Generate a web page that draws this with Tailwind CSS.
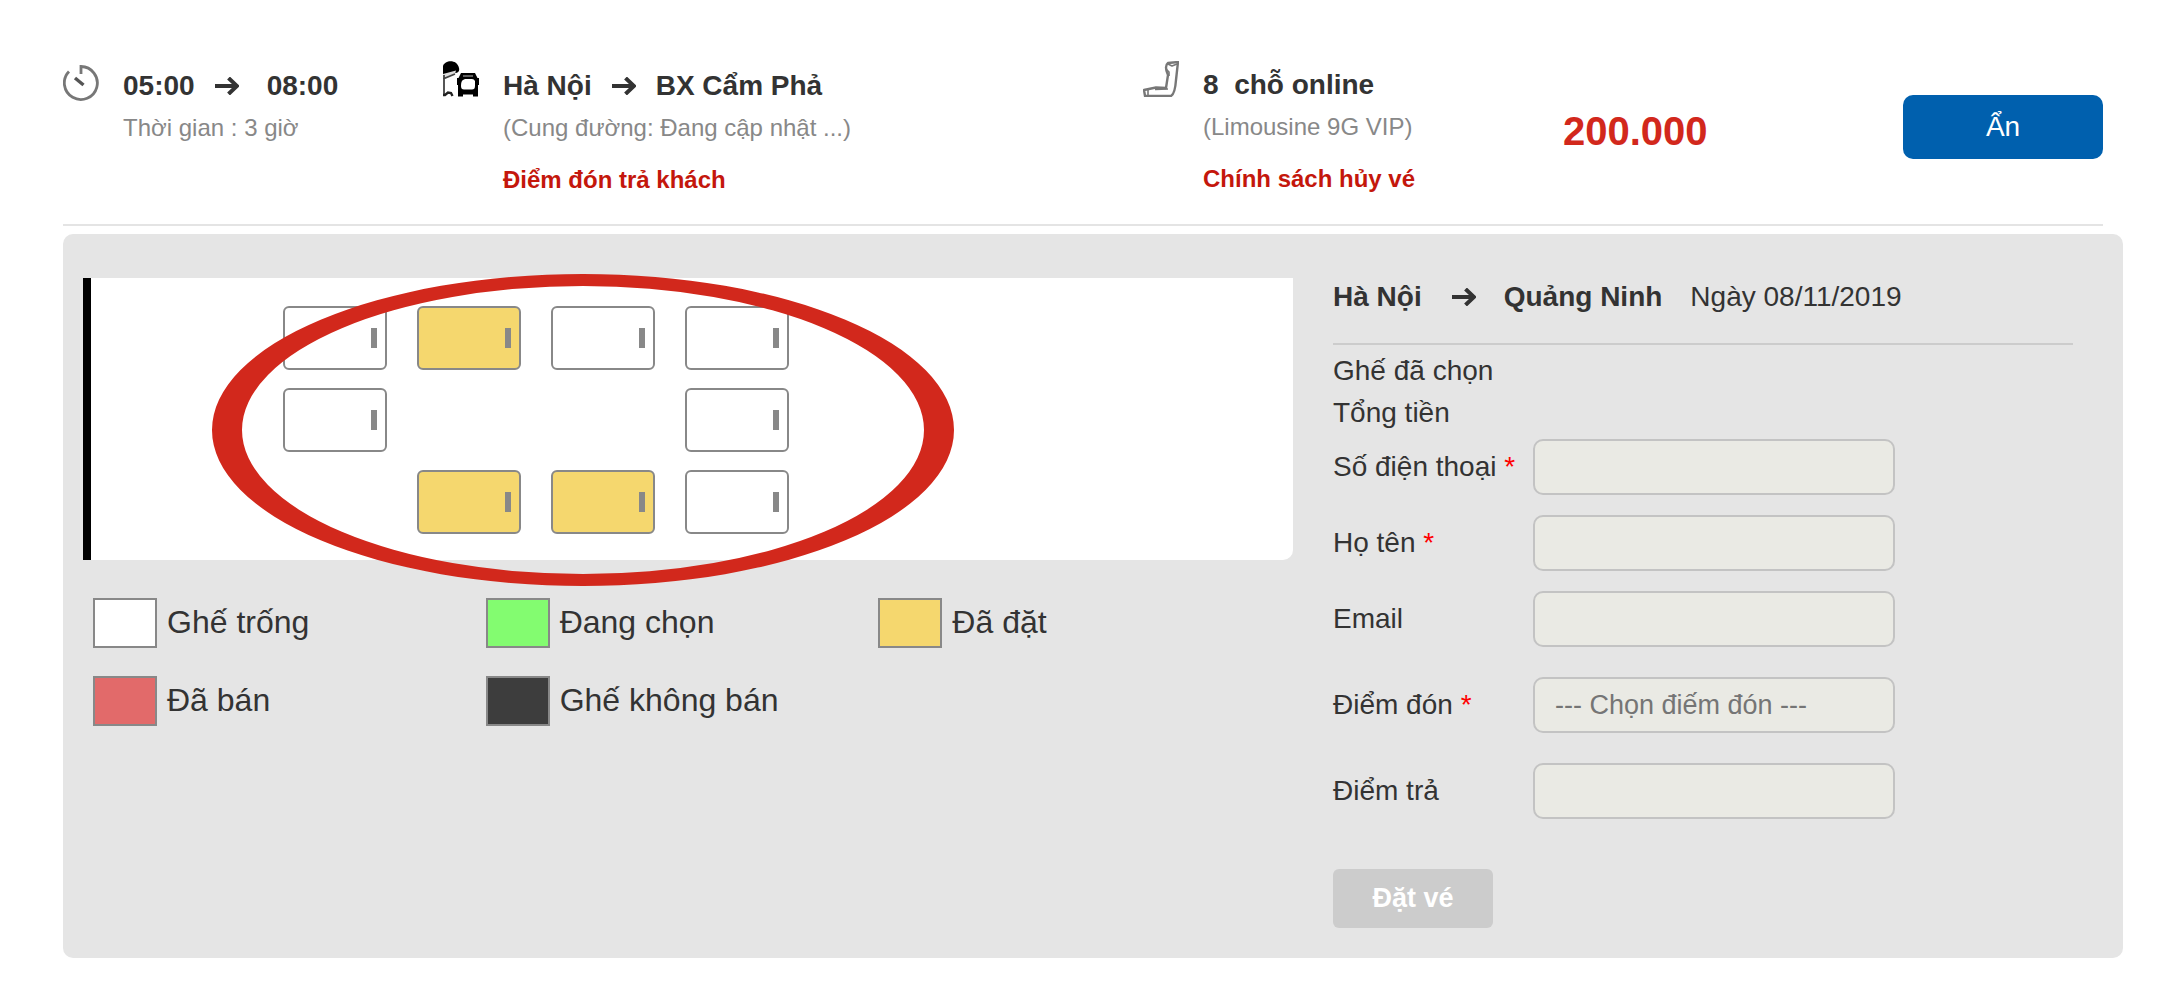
<!DOCTYPE html>
<html lang="vi">
<head>
<meta charset="utf-8">
<meta name="viewport" content="width=device-width, initial-scale=1">
<title>Đặt vé Hà Nội - Quảng Ninh</title>
<script src="https://cdn.jsdelivr.net/npm/@tailwindcss/browser@4"></script>
</head>
<body class="bg-white font-['Liberation_Sans',Arial,sans-serif] text-[28px] leading-[42px] text-[#333333]">
<svg class="hidden">
  <symbol id="arrow" viewBox="0 0 24 18"><path d="M0 9H22M13.500 1L22 9L13.500 17" fill="none" stroke="#333333" stroke-width="4"/></symbol>
</svg>
<div class="pl-[63px] pr-[61px] pt-[65px]">
  <header class="mr-5 flex h-[161px] border-b-2 border-[#e4e4e4]">
    <section class="flex w-[380px] gap-6">
      <svg class="size-9 shrink-0" viewBox="0 0 36 36" fill="none">
        <path d="M18 9V1.500A16.500 16.500 0 1 1 6 6.500" stroke="#777777" stroke-width="2.800"/>
        <path d="M12 13L20.500 20" stroke="#555555" stroke-width="3.400"/>
      </svg>
      <div>
        <p class="flex items-center font-bold">05:00<svg class="ml-5 mr-7 h-[18px] w-6"><use href="#arrow"/></svg>08:00</p>
        <p class="text-2xl leading-[42px] text-[#888888]">Thời gian : 3 giờ</p>
      </div>
    </section>
    <section class="flex w-[700px] gap-6">
      <svg class="-mt-1 size-9 shrink-0" viewBox="0 0 36 36">
        <path d="M0 5C2-1 14-2 16 7Q17 11 13 12L0 14Z" fill="#000000"/>
        <path d="M0 13L13 9.500L12 13L0 18Z" fill="#dddddd"/>
        <path d="M1 14V34M0 18L12 13" fill="none" stroke="#444444" stroke-width="1.800"/>
        <path d="M0 34H2L5 31.500L8 32L9.500 35" fill="none" stroke="#222222" stroke-width="2.400"/>
        <path fill-rule="evenodd" d="M18 12H32L34.500 17H36V24H35V35.500H30V33.500H20V35.500H15V24H14V17H15.500ZM20 19Q18 20 18 25Q18 28.500 21 28.500H29Q32 28.500 32 25V20Q31 18 29 18H22Z" fill="#000000"/>
        <path d="M20 15H30" stroke="#777777" stroke-width="1.600"/>
      </svg>
      <div>
        <p class="flex items-center font-bold">Hà Nội<svg class="mx-5 h-[18px] w-6"><use href="#arrow"/></svg>BX Cẩm Phả</p>
        <p class="text-2xl leading-[42px] text-[#888888]">(Cung đường: Đang cập nhật ...)</p>
        <a href="#diem-don" class="mt-2.5 block text-2xl leading-[42px] font-bold text-[#c4170c]">Điểm đón trả khách</a>
      </div>
    </section>
    <section class="flex flex-1 gap-6">
      <svg class="-mt-1 size-9 shrink-0" viewBox="0 0 36 36" fill="none" stroke="#777777" stroke-width="2.400" stroke-linejoin="round">
        <path d="M25 2L35 1L33 19Q32 33 28 35H2L1 29L13 26.500L23 27L25 14Q21 5 25 2Z"/>
        <path d="M23 8L26 11V15M5 29V34M25 3L29 5L34 3M12 28.500L25 28" stroke-width="1.600"/>
      </svg>
      <div class="-mt-px">
        <p class="font-bold whitespace-pre">8  chỗ online</p>
        <p class="text-2xl leading-[42px] text-[#888888]">(Limousine 9G VIP)</p>
        <a href="#chinh-sach" class="mt-2.5 block text-2xl leading-[42px] font-bold text-[#c4170c]">Chính sách hủy vé</a>
      </div>
    </section>
    <p class="mt-[42px] w-[340px] text-[40px] leading-[48px] font-bold text-[#d2281c]">200.000</p>
    <button class="mt-[30px] h-16 w-[200px] rounded-[10px] bg-[#0060ae] text-white">Ẩn</button>
  </header>

  <main class="mt-2 flex rounded-[10px] bg-[#e5e5e5] pt-11 pr-[50px] pb-[30px] pl-5">
    <section class="w-[1210px] shrink-0">
      <div class="relative rounded-br-[10px] border-l-8 border-black bg-white pt-7 pb-[26px] pl-48">
        <div class="grid grid-cols-[repeat(4,104px)] grid-rows-[repeat(3,64px)] gap-x-[30px] gap-y-[18px]">
          <button aria-label="Ghế trống" class="flex items-center justify-end rounded-md border-2 border-[#888888] bg-white pr-2"><span class="h-5 w-1.5 bg-[#888888]"></span></button>
          <button aria-label="Ghế đã đặt" class="flex items-center justify-end rounded-md border-2 border-[#888888] bg-[#f5d76e] pr-2"><span class="h-5 w-1.5 bg-[#888888]"></span></button>
          <button aria-label="Ghế trống" class="flex items-center justify-end rounded-md border-2 border-[#888888] bg-white pr-2"><span class="h-5 w-1.5 bg-[#888888]"></span></button>
          <button aria-label="Ghế trống" class="flex items-center justify-end rounded-md border-2 border-[#888888] bg-white pr-2"><span class="h-5 w-1.5 bg-[#888888]"></span></button>
          <button aria-label="Ghế trống" class="flex items-center justify-end rounded-md border-2 border-[#888888] bg-white pr-2"><span class="h-5 w-1.5 bg-[#888888]"></span></button>
          <button aria-label="Ghế trống" class="col-start-4 flex items-center justify-end rounded-md border-2 border-[#888888] bg-white pr-2"><span class="h-5 w-1.5 bg-[#888888]"></span></button>
          <button aria-label="Ghế đã đặt" class="col-start-2 flex items-center justify-end rounded-md border-2 border-[#888888] bg-[#f5d76e] pr-2"><span class="h-5 w-1.5 bg-[#888888]"></span></button>
          <button aria-label="Ghế đã đặt" class="flex items-center justify-end rounded-md border-2 border-[#888888] bg-[#f5d76e] pr-2"><span class="h-5 w-1.5 bg-[#888888]"></span></button>
          <button aria-label="Ghế trống" class="flex items-center justify-end rounded-md border-2 border-[#888888] bg-white pr-2"><span class="h-5 w-1.5 bg-[#888888]"></span></button>
        </div>
        <!-- Highlight ring around the seats -->
        <div class="pointer-events-none absolute -top-1 left-[121px] h-[312px] w-[742px] rounded-[50%] border-x-[30px] border-y-[12px] border-[#d2281c]"></div>
      </div>
      <ul class="mt-[38px] mr-[22px] ml-2.5 grid grid-cols-3 gap-y-7 text-[32px] leading-[48px]">
        <li class="flex gap-2.5"><span class="h-[50px] w-16 border-2 border-[#888888] bg-white"></span>Ghế trống</li>
        <li class="flex gap-2.5"><span class="h-[50px] w-16 border-2 border-[#888888] bg-[#83fc70]"></span>Đang chọn</li>
        <li class="flex gap-2.5"><span class="h-[50px] w-16 border-2 border-[#888888] bg-[#f5d76e]"></span>Đã đặt</li>
        <li class="flex gap-2.5"><span class="h-[50px] w-16 border-2 border-[#888888] bg-[#e26a6a]"></span>Đã bán</li>
        <li class="flex gap-2.5"><span class="h-[50px] w-16 border-2 border-[#888888] bg-[#3d3d3d]"></span>Ghế không bán</li>
      </ul>
    </section>

    <form class="ml-10 flex-1">
      <div class="flex h-[67px] items-start border-b-2 border-[#cccccc]">
        <p class="-mt-0.5 flex items-center"><b>Hà Nội</b><svg class="mr-7 ml-[30px] h-[18px] w-6"><use href="#arrow"/></svg><b>Quảng Ninh</b><span class="ml-7">Ngày 08/11/2019</span></p>
      </div>
      <p class="mt-[5px]">Ghế đã chọn</p>
      <p>Tổng tiền</p>
      <div class="mt-[5px] flex flex-col gap-[30px]">
        <div class="flex flex-col gap-5">
          <div class="flex"><label for="phone" class="w-[200px] leading-[56px]">Số điện thoại <span class="text-[#ff0000]">*</span></label><input id="phone" type="tel" class="h-14 w-[362px] rounded-[10px] border-2 border-[#c3c3c3] bg-[#eaeae4] px-5"></div>
          <div class="flex"><label for="name" class="w-[200px] leading-[56px]">Họ tên <span class="text-[#ff0000]">*</span></label><input id="name" type="text" class="h-14 w-[362px] rounded-[10px] border-2 border-[#c3c3c3] bg-[#eaeae4] px-5"></div>
          <div class="flex"><label for="email" class="w-[200px] leading-[56px]">Email</label><input id="email" type="email" class="h-14 w-[362px] rounded-[10px] border-2 border-[#c3c3c3] bg-[#eaeae4] px-5"></div>
        </div>
        <div class="flex"><label for="pickup" class="w-[200px] leading-[56px]">Điểm đón <span class="text-[#ff0000]">*</span></label><input id="pickup" type="text" placeholder="--- Chọn điếm đón ---" class="h-14 w-[362px] rounded-[10px] border-2 border-[#c3c3c3] bg-[#eaeae4] px-5 text-[27px] placeholder:text-[#757575]"></div>
        <div class="flex"><label for="dropoff" class="w-[200px] leading-[56px]">Điểm trả</label><input id="dropoff" type="text" class="h-14 w-[362px] rounded-[10px] border-2 border-[#c3c3c3] bg-[#eaeae4] px-5"></div>
      </div>
      <button type="button" class="mt-[50px] block h-[59px] w-40 rounded-md bg-[#cccccc] pb-0.5 text-[27px] font-bold text-white">Đặt vé</button>
    </form>
  </main>
</div>
</body>
</html>
